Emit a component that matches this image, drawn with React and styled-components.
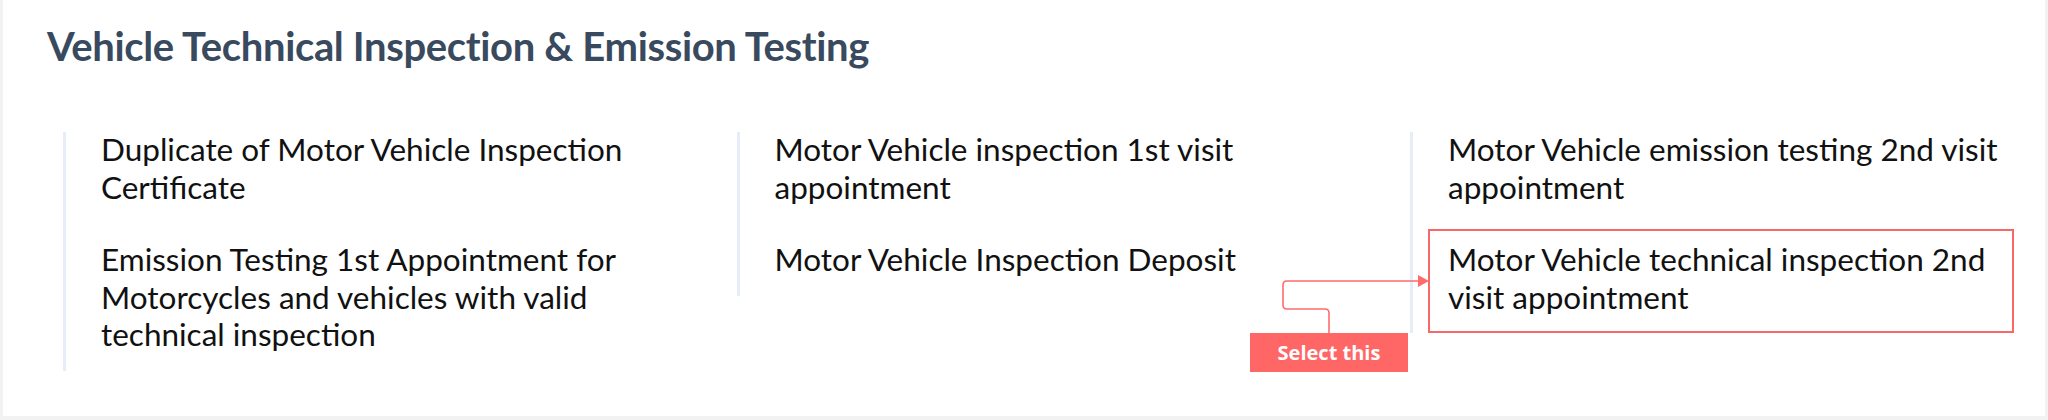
import styled, { createGlobalStyle } from "styled-components";

const GlobalStyle = createGlobalStyle`
  html, body {
    margin: 0;
    padding: 0;
    background: #f2f2f2;
  }
  * {
    box-sizing: border-box;
  }
`;

const services = [
  [
    { id: "dup-cert", label: "Duplicate of Motor Vehicle Inspection Certificate" },
    {
      id: "emission-1st",
      label:
        "Emission Testing 1st Appointment for Motorcycles and vehicles with valid technical inspection",
    },
  ],
  [
    { id: "inspection-1st", label: "Motor Vehicle inspection 1st visit appointment" },
    { id: "deposit", label: "Motor Vehicle Inspection Deposit" },
  ],
  [
    { id: "emission-2nd", label: "Motor Vehicle emission testing 2nd visit appointment" },
    {
      id: "technical-2nd",
      label: "Motor Vehicle technical inspection 2nd visit appointment",
    },
  ],
];

const selectedId = "technical-2nd";

export default function App() {
  return (
    <>
      <GlobalStyle />
      <StyledCard>
        <StyledTitle>Vehicle Technical Inspection &amp; Emission Testing</StyledTitle>
        <StyledGrid>
          {services.map((column, index) => (
            <StyledColumn key={index}>
              <StyledList>
                {column.map((service) => (
                  <StyledItem key={service.id} $selected={service.id === selectedId}>
                    {service.label}
                  </StyledItem>
                ))}
              </StyledList>
            </StyledColumn>
          ))}
        </StyledGrid>

        <StyledConnector width="156" height="62" viewBox="0 0 156 62" fill="none">
          <path
            d="M53 62 V41 Q53 37 49 37 H11 Q7 37 7 33 V13 Q7 9 11 9 H143"
            stroke="#ff6b6b"
            strokeWidth="1.6"
          />
          <polygon points="153,9 142,3 142,15" fill="#ff6b6b" />
        </StyledConnector>
        <StyledHint>Select this</StyledHint>
      </StyledCard>
    </>
  );
}

const StyledCard = styled.section`
  position: relative;
  margin: 0 3px;
  height: 416px;
  padding: 22px 0 0 44px;
  background: #ffffff;
`;

const StyledTitle = styled.h1`
  margin: 0;
  font-family: Lato, "Open Sans", sans-serif;
  font-size: 40px;
  font-weight: 700;
  line-height: 48px;
  letter-spacing: -0.35px;
  color: #394a5f;
`;

const StyledGrid = styled.div`
  display: grid;
  grid-template-columns: repeat(3, 604px);
  column-gap: 69.5px;
  align-items: start;
  margin: 62px 0 0 16px;
`;

const StyledColumn = styled.div`
  border-left: 3px solid #e7edf8;
  padding-left: 15px;
`;

const StyledList = styled.ul`
  display: flex;
  flex-direction: column;
  gap: 6px;
  margin: -13px 0 0;
  padding: 0;
  list-style: none;
`;

const StyledItem = styled.li`
  padding: 10px 4px 15px 18px;
  border: 2px solid ${(props) => (props.$selected ? "#f86868" : "transparent")};
  font-family: Lato, "Open Sans", sans-serif;
  font-size: 31.5px;
  line-height: 37.5px;
  color: #111111;
  cursor: pointer;
`;

const StyledConnector = styled.svg`
  position: absolute;
  left: 1273px;
  top: 272px;
`;

const StyledHint = styled.div`
  position: absolute;
  left: 1247px;
  top: 333px;
  width: 158px;
  height: 39px;
  display: flex;
  align-items: center;
  justify-content: center;
  background: #ff6666;
  color: #ffffff;
  font-family: "Open Sans", sans-serif;
  font-size: 20px;
  font-weight: 700;
`;
